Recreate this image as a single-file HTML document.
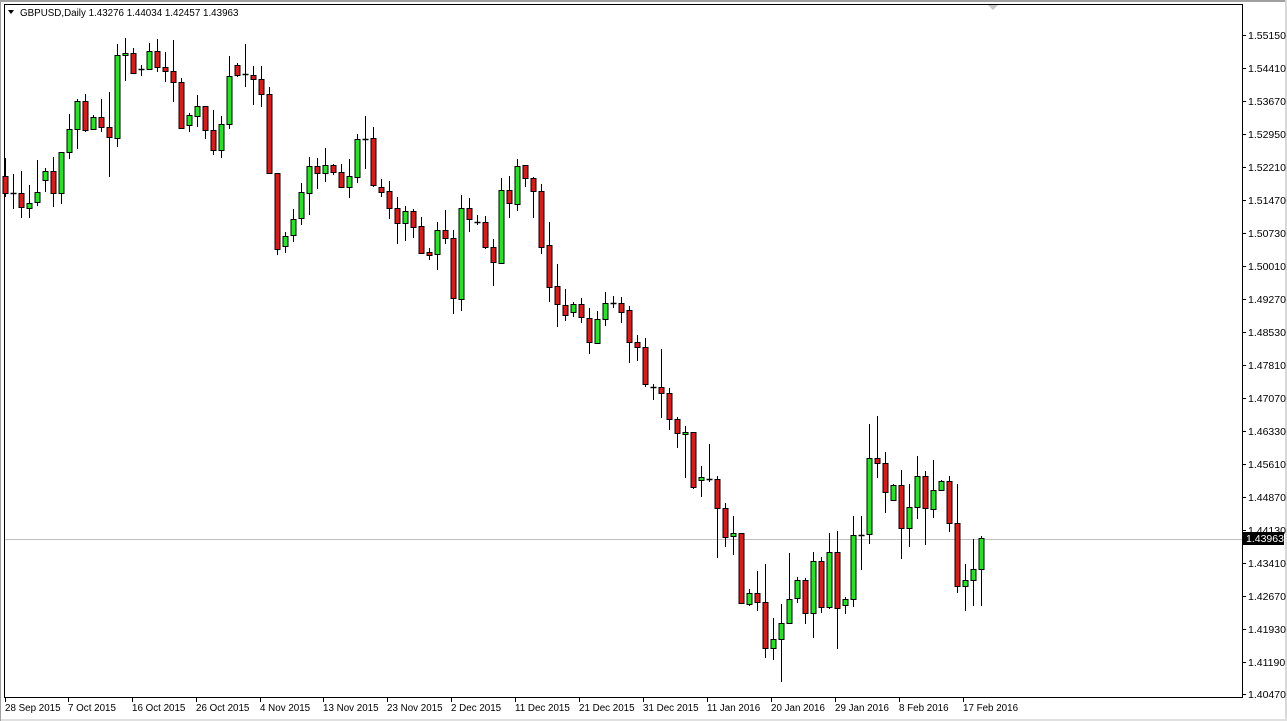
<!DOCTYPE html>
<html><head><meta charset="utf-8">
<style>
html,body{margin:0;padding:0;background:#fff;}
body{width:1287px;height:721px;overflow:hidden;position:relative;font-family:"Liberation Sans",sans-serif;}
svg{position:absolute;left:0;top:0;}
</style></head>
<body>
<svg id="s" width="1287" height="721" xmlns="http://www.w3.org/2000/svg" font-family="Liberation Sans, sans-serif" font-size="10.5">
<rect x="0" y="0" width="1287" height="721" fill="#fff"/>
<rect x="0" y="0" width="1287" height="2" fill="#a0a0a0"/>
<rect x="1285" y="0" width="2" height="721" fill="#d8d8d8"/>
<rect x="0" y="719" width="1287" height="2" fill="#e0e0e0"/>
<rect x="4.5" y="4.5" width="1238" height="693" fill="none" stroke="#000" stroke-width="1"/>
<line x1="0.5" y1="2" x2="0.5" y2="721" stroke="#a0a0a0"/>
<polygon points="988,5 998,5 993,10" fill="#c8c8c8"/>
<polygon points="8,10 14,10 11,14" fill="#000"/>
<text x="20" y="16" fill="#000" font-size="9.8">GBPUSD,Daily  1.43276 1.44034 1.42457 1.43963</text>
<line x1="5" y1="539.5" x2="1242" y2="539.5" stroke="#c0c0c0"/>
<g id="c"></g>
<g id="ax"></g>
<rect x="1243" y="532" width="41" height="13" fill="#000"/>
<text x="1246" y="542" fill="#fff">1.43963</text>
</svg>
<script>
var D=[
[5,176,193,158,197,'r'],[13,193,193,174,209,'d'],[21,193,207,171,218,'r'],[29,208,203,185,218,'g'],[37,202,192,160,206,'g'],
[45,180,171,168,192,'g'],[53,171,193,157,207,'r'],[61,193,152,152,204,'g'],[69,152,129,114,159,'g'],[77,129,101,99,149,'g'],
[85,101,130,94,132,'r'],[93,129,117,115,130,'g'],[101,117,127,99,132,'r'],[109,127,137,92,177,'r'],[117,138,55,44,147,'g'],
[125,55,53,38,81,'g'],[133,53,73,48,73,'r'],[141,69,69,65,76,'d'],[149,69,51,43,70,'g'],[157,51,67,39,72,'r'],
[165,67,71,52,82,'r'],[173,71,82,40,102,'r'],[181,82,128,78,129,'r'],[189,125,115,113,132,'g'],[197,116,106,95,127,'g'],
[205,106,130,106,139,'r'],[213,130,150,110,155,'r'],[221,150,124,116,158,'g'],[229,124,76,56,129,'g'],[237,65,75,63,77,'r'],
[245,74,74,44,87,'d'],[253,75,79,66,105,'r'],[261,79,94,66,107,'r'],[269,94,173,87,174,'r'],[277,173,249,173,255,'r'],
[285,246,236,232,253,'g'],[293,235,219,209,242,'g'],[301,218,192,183,225,'g'],[309,193,166,157,215,'g'],[317,166,173,158,189,'r'],
[325,173,165,148,182,'g'],[333,165,172,164,175,'r'],[341,172,187,164,188,'r'],[349,187,176,159,198,'g'],[357,177,139,134,183,'g'],
[365,139,139,116,169,'d'],[373,138,185,127,187,'r'],[381,187,192,179,197,'r'],[389,191,208,181,219,'r'],[397,208,223,197,244,'r'],
[405,223,211,206,241,'g'],[413,211,227,209,238,'r'],[421,226,253,217,254,'r'],[429,252,255,248,260,'r'],[437,254,230,222,270,'g'],
[445,230,238,210,244,'r'],[453,238,298,230,314,'r'],[461,299,208,195,311,'g'],[469,208,219,198,232,'r'],[477,222,222,215,225,'d'],
[485,222,247,216,249,'r'],[493,247,262,239,286,'r'],[501,263,190,178,263,'g'],[509,190,203,176,218,'r'],[517,204,166,159,211,'g'],
[525,165,178,165,187,'r'],[533,178,191,177,218,'r'],[541,191,247,184,254,'r'],[549,245,287,222,302,'r'],[557,286,304,264,327,'r'],
[565,305,315,289,321,'r'],[573,312,304,302,317,'g'],[581,304,317,298,323,'r'],[589,318,342,308,354,'r'],[597,343,319,311,343,'g'],
[605,319,303,292,326,'g'],[613,303,303,296,308,'d'],[621,303,312,297,323,'r'],[629,310,342,306,363,'r'],[637,342,347,335,361,'r'],
[645,347,384,338,387,'r'],[653,387,387,384,400,'d'],[661,387,393,349,418,'r'],[669,393,419,388,430,'r'],[677,419,433,417,448,'r'],
[685,434,432,426,478,'g'],[693,432,487,432,489,'r'],[701,480,477,466,497,'g'],[709,479,479,444,482,'d'],[717,479,508,476,558,'r'],
[725,508,537,503,547,'r'],[733,536,533,516,555,'g'],[741,533,603,533,604,'r'],[749,604,593,589,606,'g'],[757,593,602,571,611,'r'],
[765,602,648,564,658,'r'],[773,648,639,618,660,'g'],[781,639,623,604,682,'g'],[789,623,599,553,623,'g'],[797,598,580,577,603,'g'],
[805,580,613,578,624,'r'],[813,613,561,552,638,'g'],[821,561,607,557,613,'r'],[829,607,552,533,609,'g'],[837,552,608,531,649,'r'],
[845,605,599,597,614,'g'],[853,599,535,516,607,'g'],[861,535,535,516,570,'d'],[869,534,458,424,544,'g'],[877,458,463,416,478,'r'],
[885,463,492,452,513,'r'],[893,500,485,484,500,'g'],[901,485,528,470,559,'r'],[909,528,507,484,547,'g'],[917,507,476,456,519,'g'],
[925,476,508,471,545,'r'],[933,509,490,460,518,'g'],[941,490,481,480,490,'g'],[949,481,523,476,532,'r'],[957,523,586,484,593,'r'],
[965,586,580,564,611,'g'],[973,580,569,539,606,'g'],[981,569,538,536,606,'g']
];
var g=document.getElementById('c'),h='';
D.forEach(function(d){
 var x=d[0]+0.5,o=d[1],c=d[2],hi=d[3],lo=d[4],t=d[5];
 h+='<line x1="'+x+'" y1="'+hi+'" x2="'+x+'" y2="'+lo+'" stroke="#000"/>';
 if(t=='d'){h+='<line x1="'+(x-3)+'" y1="'+(o+0.5)+'" x2="'+(x+3)+'" y2="'+(o+0.5)+'" stroke="#000" stroke-width="1.5"/>';}
 else{var top=Math.min(o,c),bh=Math.max(Math.abs(o-c),2);
 h+='<rect x="'+(x-2.5)+'" y="'+(top+0.5)+'" width="5" height="'+bh+'" fill="'+(t=='g'?'#22e622':'#e01818')+'" stroke="#000" stroke-width="1"/>';}
});
g.innerHTML=h;
var P=[["1.55150",35],["1.54410",68],["1.53670",101],["1.52950",134],["1.52210",167],["1.51470",200],["1.50730",233],["1.50010",266],["1.49270",299],["1.48530",332],["1.47810",365],["1.47070",398],["1.46330",431],["1.45610",464],["1.44870",497],["1.44130",530],["1.43410",563],["1.42670",596],["1.41930",629],["1.41190",662],["1.40470",694]];
var a='';
P.forEach(function(p){a+='<line x1="1243" y1="'+(p[1]+0.5)+'" x2="1246" y2="'+(p[1]+0.5)+'" stroke="#000"/><text x="1248" y="'+(p[1]+4)+'">'+p[0]+'</text>';});
var T=[["28 Sep 2015",5],["7 Oct 2015",68],["16 Oct 2015",132],["26 Oct 2015",196],["4 Nov 2015",260],["13 Nov 2015",323],["23 Nov 2015",387],["2 Dec 2015",451],["11 Dec 2015",515],["21 Dec 2015",579],["31 Dec 2015",643],["11 Jan 2016",707],["20 Jan 2016",771],["29 Jan 2016",835],["8 Feb 2016",899],["17 Feb 2016",963]];
T.forEach(function(t){a+='<line x1="'+(t[1]+0.5)+'" y1="698" x2="'+(t[1]+0.5)+'" y2="702" stroke="#000"/><text x="'+t[1]+'" y="711" font-size="9.8">'+t[0]+'</text>';});
document.getElementById('ax').innerHTML=a;
</script>
</body></html>
